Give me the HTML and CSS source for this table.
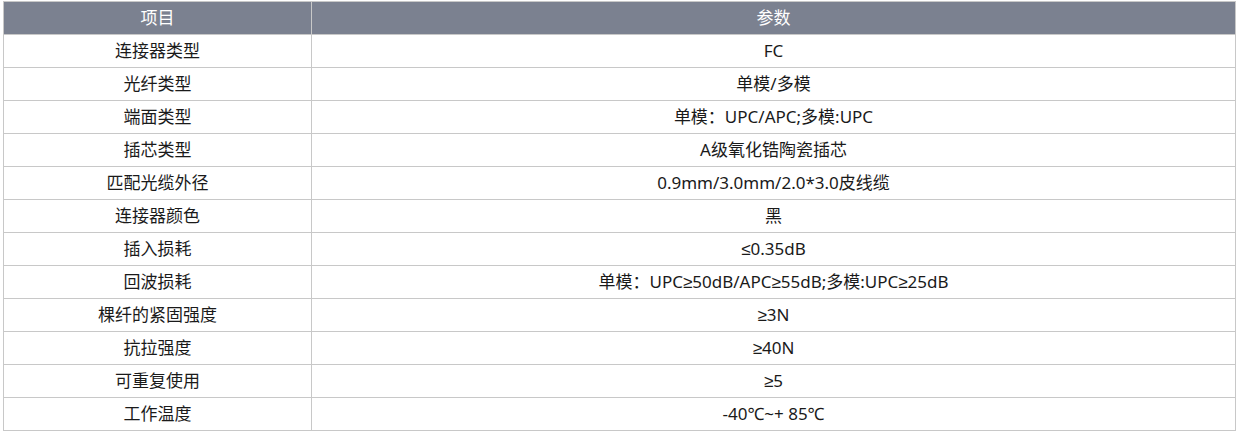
FILE: index.html
```html
<!DOCTYPE html>
<html lang="zh-CN">
<head>
<meta charset="utf-8">
<link rel="stylesheet" href="styles.css">
</head>
<body>
<table class="spec">
  <thead>
    <tr><th class="c1">项目</th><th>参数</th></tr>
  </thead>
  <tbody>
    <tr><td>连接器类型</td><td>FC</td></tr>
    <tr><td>光纤类型</td><td>单模/多模</td></tr>
    <tr><td>端面类型</td><td>单模：UPC/APC;多模:UPC</td></tr>
    <tr><td>插芯类型</td><td>A级氧化锆陶瓷插芯</td></tr>
    <tr><td>匹配光缆外径</td><td>0.9mm/3.0mm/2.0*3.0皮线缆</td></tr>
    <tr><td>连接器颜色</td><td>黑</td></tr>
    <tr><td>插入损耗</td><td>≤0.35dB</td></tr>
    <tr><td>回波损耗</td><td>单模：UPC≥50dB/APC≥55dB;多模:UPC≥25dB</td></tr>
    <tr><td>棵纤的紧固强度</td><td>≥3N</td></tr>
    <tr><td>抗拉强度</td><td>≥40N</td></tr>
    <tr><td>可重复使用</td><td>≥5</td></tr>
    <tr><td>工作温度</td><td>-40℃~+ 85℃</td></tr>
  </tbody>
</table>
</body>
</html>
```

FILE: styles.css
```css
html, body {
  margin: 0;
  background: #ffffff;
}
body {
  padding: 1px 4px 0 3px;
  font-family: "Noto Sans", "Liberation Sans", "Noto Sans CJK SC", sans-serif;
}
.spec {
  width: 1233px;
  border-collapse: collapse;
  table-layout: fixed;
}
.spec th, .spec td {
  border: 1px solid #c8c8c8;
  height: 32px;
  padding: 0;
  text-align: center;
  vertical-align: middle;
  font-size: 17px;
  line-height: 20px;
}
.spec th {
  background: #7b8190;
  color: #ffffff;
  font-weight: normal;
}
.spec td {
  color: #1a1a1a;
}
.spec .c1 {
  width: 307px;
}
```
